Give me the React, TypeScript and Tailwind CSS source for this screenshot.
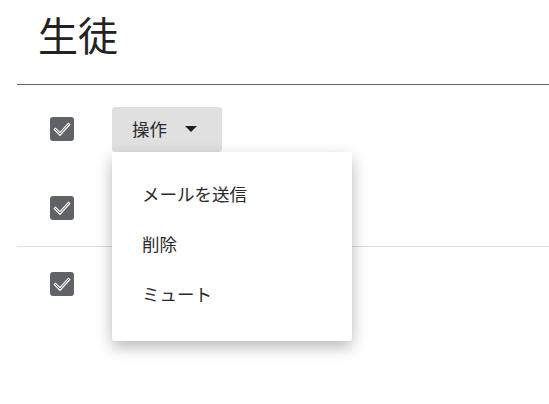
const font = { fontFamily: '"Noto Sans CJK JP", "Noto Sans", sans-serif' };

function Check() {
  return (
    <svg width="24" height="24" viewBox="0 0 24 24" className="shrink-0">
      <rect x="0" y="0" width="24" height="24" rx="3" fill="#5f6368" />
      <path d="M5.5 12.5 L10 17 L18.5 7.5" fill="none" stroke="#ffffff" strokeWidth="3" strokeLinecap="square" />
      <path d="M5.5 12.5 L10 17 L18.5 7.5" fill="none" stroke="#5f6368" strokeWidth="1" strokeLinecap="square" />
    </svg>
  );
}

const items = ["メールを送信", "削除", "ミュート"];

export default function App() {
  return (
    <div className="w-[549px] h-[404px] bg-white text-[#222222] overflow-hidden" style={font}>
      <div className="ml-[17px]">
        <div className="h-[85px] border-b border-[#5f6368] pl-[21px] pt-[12px]">
          <h1 className="text-[40px] leading-[44px] font-normal">生徒</h1>
        </div>

        <div className="h-[85px] pt-[3px] pl-[33px] flex items-center gap-[38px]">
          <Check />
          <div className="relative">
            <button className="h-[45px] w-[110px] bg-[#e0e0e0] rounded-[3px] flex items-center pl-[20px] text-[17.5px] text-[#2a2a2a]">
              <span>操作</span>
              <span className="ml-[18px] w-0 h-0 border-l-[6px] border-r-[6px] border-t-[6px] border-l-transparent border-r-transparent border-t-[#202124]" />
            </button>
            <div className="absolute left-0 top-full z-10 w-[240px] bg-white rounded-[3px] pt-[18px] pb-[21px] shadow-[0_6px_16px_rgba(0,0,0,0.28)]">
              {items.map((item) => (
                <div key={item} className="h-[50px] flex items-center pl-[30px] text-[17.5px] text-[#2a2a2a]">
                  {item}
                </div>
              ))}
            </div>
          </div>
        </div>

        <div className="h-[77px] border-b border-[#dddddd] pl-[33px] flex items-center">
          <Check />
        </div>
        <div className="h-[74px] pl-[33px] flex items-center">
          <Check />
        </div>
      </div>
    </div>
  );
}
